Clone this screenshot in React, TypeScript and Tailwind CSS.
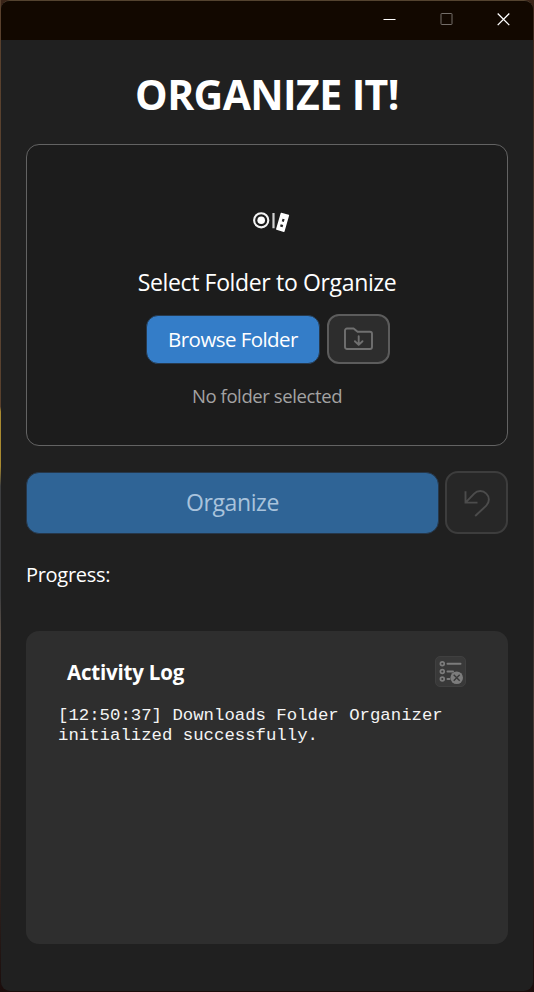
function TitleBar() {
  return (
    <header className="flex h-[38px] shrink-0 justify-end bg-[#120800]">
      <button aria-label="Minimize" className="flex w-[57px] items-start justify-center pt-[11px] pr-[2px]">
        <svg width="13" height="13" viewBox="0 0 13 13" stroke="#fff" strokeWidth="1.2">
          <path d="M0.5 6.5h12" />
        </svg>
      </button>
      <button aria-label="Maximize" className="flex w-[57px] items-start justify-center pt-[11px] pr-[2px]">
        <svg width="13" height="13" viewBox="0 0 13 13" fill="none" stroke="#746e69">
          <rect x="1" y="0.5" width="11" height="11" rx="0.6" />
        </svg>
      </button>
      <button aria-label="Close" className="flex w-[57px] items-start justify-center pt-[11px] pr-[2px]">
        <svg width="13" height="13" viewBox="0 0 13 13" stroke="#fff" strokeWidth="1.3">
          <path d="M0.7 0.5l11.6 11.6M12.3 0.5L0.7 12.1" />
        </svg>
      </button>
    </header>
  );
}

function DropMark() {
  return (
    <svg width="38" height="24" viewBox="0 0 38 24" fill="none">
      <circle cx="9.2" cy="10.3" r="7.1" stroke="#f4f4f4" strokeWidth="2.1" />
      <circle cx="9.2" cy="10.3" r="3.8" fill="#fff" />
      <path d="M21.5 3v15.2" stroke="#d2d2d2" strokeWidth="2.2" />
      <g transform="rotate(16 30.5 12.3)">
        <rect x="26.2" y="3.4" width="8.8" height="17.8" rx="0.6" fill="#fff" />
        <rect x="29.5" y="8.8" width="2.2" height="2.8" fill="#222" />
        <rect x="29.3" y="14.8" width="2.6" height="2.2" fill="#222" />
      </g>
    </svg>
  );
}

function FolderDown() {
  return (
    <svg width="30" height="24" viewBox="0 0 30 24" fill="none" stroke="#707070" strokeWidth="1.9" strokeLinecap="round" strokeLinejoin="round">
      <path d="M3 1.500h6.600l4 3.300h12.400a2 2 0 0 1 2 2v13.200a2 2 0 0 1-2 2h-23a2 2 0 0 1-2-2V3.500a2 2 0 0 1 2-2Z" />
      <path d="M14.700 9.200v8.600M10.900 14.200l3.800 3.700 3.800-3.700" />
    </svg>
  );
}

function UndoArrow() {
  return (
    <svg width="28" height="28" viewBox="0 0 28 28" fill="none" stroke="#4c4c4c" strokeWidth="1.9">
      <path d="M2.500 2.200v11.400h12M2.500 13.600l8.700-9a8.300 8.300 0 0 1 12.100 0a8.300 8.300 0 0 1 0 12L12.200 27" />
    </svg>
  );
}

function ClearList() {
  return (
    <svg width="31" height="31" viewBox="0 0 31 31" fill="none" stroke="#7c7c7c" strokeWidth="1.7">
      <circle cx="7.300" cy="7.800" r="1.900" />
      <circle cx="7.300" cy="15.500" r="1.900" />
      <circle cx="7.300" cy="23" r="1.900" />
      <path d="M12.500 7.800h13M12.500 15.500h5.500M12.500 23h2" strokeWidth="2" strokeLinecap="round" />
      <circle cx="21.700" cy="21.800" r="6.300" fill="#7c7c7c" stroke="none" />
      <path d="M18.700 18.800l6 6M24.700 18.800l-6 6" stroke="#3a3a3a" strokeWidth="1.400" />
    </svg>
  );
}

export default function App() {
  return (
    <div className="h-[992px] w-[534px] bg-[linear-gradient(to_bottom,#59402c_0%,#594332_33%,#59402c_41%,#a98a30_41.5%,#a98a30_47%,#3c3d3f_49%,#3c3d3f_60%,#5d5046_64%,#40352f_80%,#1b0d0c_100%)] pl-px font-['Open_Sans','Noto_Sans',sans-serif] text-white">
      <div className="h-full bg-[linear-gradient(to_bottom,#3a2418_0%,#4a3a31_30%,#2b2523_60%,#4a3a35_72%,#1b0d0c_100%)] pr-px pb-px">
        <div className="flex h-full flex-col overflow-hidden rounded-[9px] border-t border-[#54432f] bg-[#202020]">
          <div className="h-px shrink-0 bg-[#120800]" />
          <TitleBar />
          <main className="flex flex-1 flex-col px-[25px]">
            <h1 className="mt-[26px] text-center text-[41px] leading-[56px] font-bold tracking-[-0.6px] whitespace-nowrap">ORGANIZE IT!</h1>

            <section className="mt-[22px] flex h-[302px] shrink-0 flex-col items-center rounded-[13px] border border-[#636363] bg-[#1c1c1c]">
              <div className="mt-[65px] ml-[7px]">
                <DropMark />
              </div>
              <h2 className="mt-[32px] text-[23px] leading-8 tracking-[-0.35px] whitespace-nowrap">Select Folder to Organize</h2>
              <div className="mt-4 ml-[2px] flex items-center gap-[7px]">
                <button className="h-[49px] w-[174px] rounded-xl border border-[#273a4e] bg-[#347dc8] pt-px text-[20.5px] tracking-[-0.55px] whitespace-nowrap">Browse Folder</button>
                <button aria-label="Open downloads" className="flex h-[50px] w-[63px] items-center justify-center rounded-xl border-2 border-[#5c5c5c] bg-[#2d2d2d]">
                  <FolderDown />
                </button>
              </div>
              <p className="mt-[18px] text-[18.5px] leading-7 tracking-[-0.4px] whitespace-nowrap text-[#a3a3a3]">No folder selected</p>
            </section>

            <div className="mt-[25px] flex items-center gap-[6px]">
              <button className="h-[62px] flex-1 rounded-[13px] border border-[#26374a] bg-[#2f6496] text-[23px] tracking-[-0.4px] text-[#a9c3dc]">Organize</button>
              <button aria-label="Undo" className="flex h-[63px] w-[63px] items-center justify-center rounded-[13px] border-2 border-[#3d3d3d] bg-[#272727]">
                <UndoArrow />
              </button>
            </div>

            <p className="mt-[27px] text-[20px] leading-7 tracking-[-0.3px]">Progress:</p>

            <section className="mt-[42px] h-[313px] shrink-0 rounded-[13px] bg-[#2e2e2e] px-[31px] pt-[25px]">
              <div className="flex items-center justify-between pr-[11px] pl-[10px]">
                <h2 className="pt-px text-[20.5px] leading-[30px] font-bold tracking-[-0.2px] whitespace-nowrap">Activity Log</h2>
                <button aria-label="Clear log" className="rounded-[5px] border border-[#404040] bg-[#393939]">
                  <span className="-m-px block">
                    <ClearList />
                  </span>
                </button>
              </div>
              <p className="mt-[19px] pl-px font-['Liberation_Mono',monospace] text-[17.33px] leading-5 text-[#f4f4f4]">
                [12:50:37] Downloads Folder Organizer initialized successfully.
              </p>
            </section>
          </main>
        </div>
      </div>
    </div>
  );
}
